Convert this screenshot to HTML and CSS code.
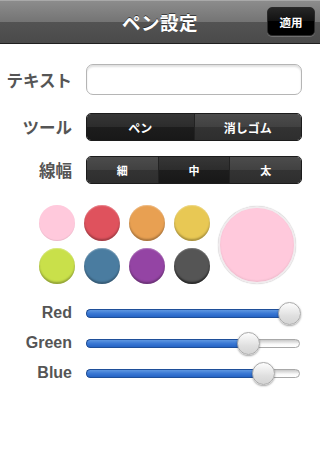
FILE: index.html
```html
<!DOCTYPE html>
<html lang="ja">
<head>
<meta charset="utf-8">
<link rel="stylesheet" href="styles.css">
</head>
<body>
<div class="screen">
  <header class="nav">
    <h1 class="nav-title">ペン設定</h1>
    <button class="nav-btn">適用</button>
  </header>
  <main class="form">
    <div class="row row-text">
      <span class="label">テキスト</span>
      <div class="textfield"></div>
    </div>
    <div class="row row-tool">
      <span class="label">ツール</span>
      <div class="seg">
        <span class="seg-item sel">ペン</span>
        <span class="seg-item">消しゴム</span>
      </div>
    </div>
    <div class="row row-width">
      <span class="label">線幅</span>
      <div class="seg seg-small">
        <span class="seg-item">細</span>
        <span class="seg-item sel">中</span>
        <span class="seg-item">太</span>
      </div>
    </div>
    <div class="colors">
      <div class="swatches">
        <span class="sw sw-pink"></span>
        <span class="sw sw-red"></span>
        <span class="sw sw-orange"></span>
        <span class="sw sw-yellow"></span>
        <span class="sw sw-lime"></span>
        <span class="sw sw-blue"></span>
        <span class="sw sw-purple"></span>
        <span class="sw sw-dark"></span>
      </div>
      <div class="preview"></div>
    </div>
    <div class="sliders">
      <div class="srow">
        <span class="slabel">Red</span>
        <div class="track"><div class="fill" style="--v:1"><span class="thumb"></span></div></div>
      </div>
      <div class="srow">
        <span class="slabel">Green</span>
        <div class="track"><div class="fill" style="--v:0.79"><span class="thumb"></span></div></div>
      </div>
      <div class="srow">
        <span class="slabel">Blue</span>
        <div class="track"><div class="fill" style="--v:0.867"><span class="thumb"></span></div></div>
      </div>
    </div>
  </main>
</div>
</body>
</html>
```
FILE: styles.css
```css
* { box-sizing: border-box; }
html, body { margin: 0; padding: 0; background: #fff; }
body {
  font-family: "Noto Sans CJK JP", "Liberation Sans", sans-serif;
}
.screen { width: 320px; height: 460px; overflow: hidden; background: #fff; }

.nav {
  position: relative;
  height: 44px;
  display: flex;
  align-items: center;
  justify-content: center;
  border-top: 1px solid #a9a9a9;
  border-bottom: 1px solid #202020;
  background: linear-gradient(#8c8c8c 0, #747474 21px, #535353 21px, #4a4a4a 42px);
}
.nav-title {
  margin: 0;
  color: #fff;
  font-size: 18.5px;
  font-weight: bold;
  letter-spacing: 0.5px;
  text-shadow: 0 -1px 0 rgba(0,0,0,0.5);
}
.nav-btn {
  position: absolute;
  right: 5px;
  top: 6px;
  width: 48px;
  height: 29px;
  padding: 0;
  border: 1px solid #2a2a2a;
  border-radius: 5px;
  background: linear-gradient(#262626 0, #111 50%, #000 50%, #000 100%);
  box-shadow: 0 1px 0 rgba(255,255,255,0.2);
  color: #fff;
  font-family: "Noto Sans CJK JP", sans-serif;
  font-size: 11.5px;
  font-weight: bold;
}

.form { padding: 20px 18px 0 0; }
.row {
  display: flex;
  align-items: center;
  gap: 14px;
}
.label {
  width: 72px;
  text-align: right;
  color: #555;
  font-size: 16.5px;
  font-weight: bold;
  white-space: nowrap;
}
.textfield {
  flex: 1;
  height: 31px;
  border: 1px solid #b5b5b5;
  border-radius: 7px;
  background: #fff;
  box-shadow: inset 0 2px 2px rgba(0,0,0,0.12);
}
.row-tool { margin-top: 18px; }
.row-width { margin-top: 15px; }
.seg {
  flex: 1;
  height: 28px;
  display: flex;
  border: 1px solid #1c1c1c;
  border-radius: 5px;
  overflow: hidden;
}
.seg-item {
  flex: 1;
  display: flex;
  align-items: center;
  justify-content: center;
  color: #fff;
  font-size: 12px;
  font-weight: bold;
  background: linear-gradient(#4c4c4c 0, #414141 50%, #333 50%, #2e2e2e 100%);
  border-left: 1px solid #222;
}
.seg-item:first-child { border-left: 0; }
.seg-item.sel {
  background: linear-gradient(#363636 0, #2c2c2c 50%, #1d1d1d 50%, #181818 100%);
}
.seg-small .seg-item { font-size: 11px; }

.colors {
  display: flex;
  align-items: center;
  gap: 8px;
  margin-top: 21px;
  padding-left: 39px;
}
.swatches {
  display: grid;
  grid-template-columns: repeat(4, 36px);
  grid-auto-rows: 36px;
  column-gap: 9px;
  row-gap: 7px;
}
.sw {
  border-radius: 50%;
  box-shadow: inset 0 -2px 2px rgba(0,0,0,0.28), inset 0 1px 1px rgba(255,255,255,0.3);
}
.sw-pink { background: #ffc9dc; box-shadow: inset 0 -1px 1px rgba(0,0,0,0.08); }
.sw-red { background: #df525d; }
.sw-orange { background: #e8a052; }
.sw-yellow { background: #e8c854; }
.sw-lime { background: #c9e04a; }
.sw-blue { background: #4a7ca0; }
.sw-purple { background: #9444a4; }
.sw-dark { background: #555; box-shadow: inset 0 -2px 2px rgba(0,0,0,0.55), inset 0 1px 1px rgba(255,255,255,0.2); }
.preview {
  width: 78px;
  height: 78px;
  border-radius: 50%;
  background: #ffc9dc;
  border: 2px solid #f0ecee;
  box-shadow: 0 0 1px rgba(0,0,0,0.3), inset 0 -1px 2px rgba(0,0,0,0.08);
}

.sliders { margin-top: 14px; }
.srow {
  display: flex;
  align-items: center;
  gap: 14px;
  height: 30px;
  padding-right: 2px;
}
.slabel {
  width: 72px;
  text-align: right;
  color: #555;
  font-family: "Liberation Sans", sans-serif;
  font-size: 16px;
  font-weight: bold;
}
.track {
  flex: 1;
  height: 9px;
  border-radius: 5px;
  border: 1px solid #a8a8a8;
  background: linear-gradient(#c8c8c8, #fafafa 60%, #fff);
  position: relative;
}
.fill {
  position: absolute;
  left: -1px;
  top: -1px;
  height: 9px;
  width: calc(9px + (100% - 18px) * var(--v));
  border-radius: 5px 0 0 5px;
  border: 1px solid #1f4f99;
  border-right: 0;
  background: linear-gradient(#5f97e0, #3a78d4 50%, #2563c4);
}
.thumb {
  position: absolute;
  right: -11.5px;
  top: 50%;
  width: 23px;
  height: 23px;
  margin-top: -11.5px;
  border-radius: 50%;
  border: 1px solid #a9a9a9;
  background: linear-gradient(#fdfdfd, #e0e0e0 60%, #d4d4d4);
  box-shadow: 0 1px 2px rgba(0,0,0,0.35);
}
```
